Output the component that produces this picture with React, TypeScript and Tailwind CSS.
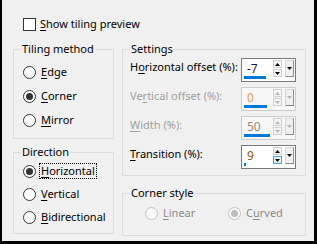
import React from 'react';

const U: React.FC<{ children: React.ReactNode }> = ({ children }) => (
  <span className="underline underline-offset-[2px] decoration-1">{children}</span>
);

type Label = [string, string, string];

const Radio: React.FC<{
  label: Label;
  checked?: boolean;
  disabled?: boolean;
  focus?: boolean;
}> = ({ label, checked, disabled, focus }) => (
  <div className="flex h-[16px] items-center gap-[3px] whitespace-nowrap">
    <div
      className={`flex h-[13px] w-[13px] shrink-0 items-center justify-center rounded-full border ${
        disabled ? 'border-[#c4c4c4] bg-[#fafafa]' : 'border-[#333] bg-white'
      }`}
    >
      {checked && (
        <div className={`h-[7px] w-[7px] rounded-full ${disabled ? 'bg-[#bcbcbc]' : 'bg-[#333]'}`} />
      )}
    </div>
    <span
      className={`px-[1px] ${focus ? 'border border-dotted border-black leading-[14px]' : 'border border-transparent'} ${
        disabled ? 'text-[#8a8a8a]' : ''
      }`}
    >
      {label[0]}
      <U>{label[1]}</U>
      {label[2]}
    </span>
  </div>
);

const UpTri = ({ c = '#000' }: { c?: string }) => (
  <svg width="5" height="3" viewBox="0 0 5 3">
    <polygon points="0,3 5,3 2.5,0" fill={c} />
  </svg>
);
const DownTri = ({ c = '#000' }: { c?: string }) => (
  <svg width="5" height="3" viewBox="0 0 5 3">
    <polygon points="0,0 5,0 2.5,3" fill={c} />
  </svg>
);

const Spin: React.FC<{
  value: string;
  bar: number;
  color: string;
  disabled?: boolean;
  hoverDown?: boolean;
}> = ({ value, bar, color, disabled, hoverDown }) => {
  const tri = disabled ? '#b5b5b5' : '#000';
  return (
    <div
      className={`flex h-[24px] w-[55px] shrink-0 border ${
        disabled ? 'border-[#cccccc] bg-[#f7f7f7]' : 'border-[#7a7a7a] bg-white'
      }`}
    >
      <div className="flex w-[31px] flex-col justify-between pb-[2px] pl-[2px]">
        <span className="pl-[3px] pt-[3px] text-[12px] leading-[14px]" style={{ color }}>
          {value}
        </span>
        <div className="h-[3px] bg-[#0078d7]" style={{ width: bar }} />
      </div>
      <div className="flex w-[10px] flex-col gap-[1px] pt-[1px]">
        <div className="flex h-[8px] w-[9px] items-center justify-center border border-[#d0d0d0] bg-[#f4f4f4]">
          <UpTri c={tri} />
        </div>
        <div
          className={`flex h-[8px] w-[9px] items-center justify-center border ${
            hoverDown ? 'border-[#4aa0e8] bg-[#e5f1fb]' : 'border-[#d0d0d0] bg-[#f4f4f4]'
          }`}
        >
          <DownTri c={tri} />
        </div>
      </div>
      <div className="ml-[2px] pt-[1px]">
        <div className="flex h-[17px] w-[9px] items-center justify-center border border-[#d6d6d6] border-b-[#8c8c8c] border-r-[#8c8c8c] bg-[#f0f0f0]">
          <DownTri c={tri} />
        </div>
      </div>
    </div>
  );
};

const Group: React.FC<{ title: string; className: string; children: React.ReactNode }> = ({
  title,
  className,
  children,
}) => (
  <fieldset className={`m-0 border border-[#dcdcdc] p-0 ${className}`}>
    <legend className="ml-[7px] px-[1px] leading-[16px]">{title}</legend>
    {children}
  </fieldset>
);

const SettingRow: React.FC<{ label: Label; disabled?: boolean; children: React.ReactNode }> = ({
  label,
  disabled,
  children,
}) => (
  <div className="flex h-[24px] items-start">
    <span className={`w-[111px] whitespace-nowrap pt-[1px] ${disabled ? 'text-[#a0a0a0]' : ''}`}>
      {label[0]}
      <U>{label[1]}</U>
      {label[2]}
    </span>
    {children}
  </div>
);

export default function App() {
  return (
    <div className="h-[244px] w-[317px] overflow-hidden border-b-[3px] border-l-2 border-r-[3px] border-black bg-[#f0f0f0] pl-[11px] pr-[8px] font-['Noto_Sans','Liberation_Sans',sans-serif] text-[11px] leading-[16px] text-black">
      <div className="ml-[10px] mt-[16px] flex h-[16px] items-center gap-[4px]">
        <div className="h-[13px] w-[13px] border border-[#333] bg-white" />
        <span>
          <U>S</U>how tiling preview
        </span>
      </div>

      <div className="mt-[9px] flex items-start gap-[8px]">
        <div className="flex w-[101px] flex-col gap-[5px]">
          <Group title="Tiling method" className="h-[98px]">
            <div className="flex flex-col gap-[8px] pl-[9px] pt-[7px]">
              <Radio label={['', 'E', 'dge']} />
              <Radio label={['', 'C', 'orner']} checked />
              <Radio label={['', 'M', 'irror']} />
            </div>
          </Group>
          <Group title="Direction" className="h-[90px]">
            <div className="flex flex-col gap-[7px] pl-[9px] pt-[3px]">
              <Radio label={['', 'H', 'orizontal']} checked focus />
              <Radio label={['', 'V', 'ertical']} />
              <Radio label={['', 'B', 'idirectional']} />
            </div>
          </Group>
        </div>

        <div className="flex w-[184px] flex-col gap-[9px]">
          <Group title="Settings" className="h-[135px]">
            <div className="flex flex-col gap-[5px] pl-[7px] pt-[1px]">
              <SettingRow label={['H', 'o', 'rizontal offset (%):']}>
                <Spin value="-7" bar={22} color="#1c1c48" />
              </SettingRow>
              <SettingRow label={['Ve', 'r', 'tical offset (%):']} disabled>
                <Spin value="0" bar={23} color="#e09a62" disabled />
              </SettingRow>
              <SettingRow label={['', 'W', 'idth (%):']} disabled>
                <Spin value="50" bar={26} color="#9c8878" disabled />
              </SettingRow>
              <SettingRow label={['', 'T', 'ransition (%):']}>
                <Spin value="9" bar={2} color="#8a5a08" hoverDown />
              </SettingRow>
            </div>
          </Group>
          <Group title="Corner style" className="h-[51px]">
            <div className="flex pl-[22px] pt-[4px]">
              <div className="w-[83px]">
                <Radio label={['', 'L', 'inear']} disabled />
              </div>
              <Radio label={['C', 'u', 'rved']} checked disabled />
            </div>
          </Group>
        </div>
      </div>
    </div>
  );
}
